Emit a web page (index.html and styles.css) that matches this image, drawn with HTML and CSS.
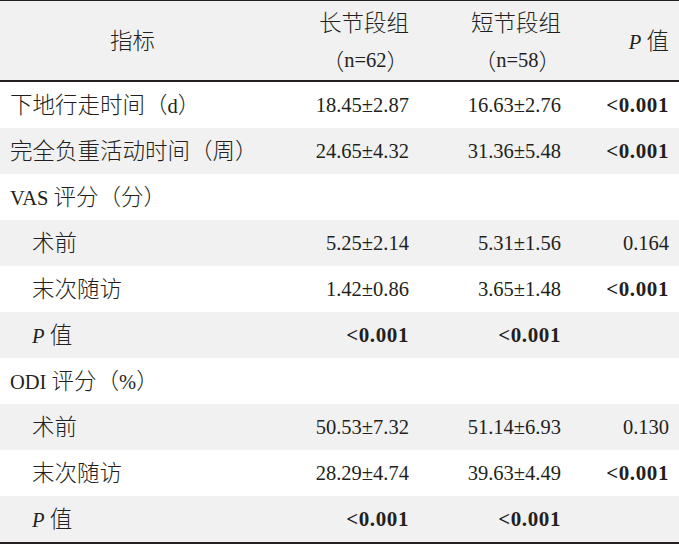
FILE: index.html
```html
<!DOCTYPE html>
<html lang="zh">
<head>
<meta charset="utf-8">
<link rel="stylesheet" href="styles.css">
</head>
<body>
<table class="tbl">
  <colgroup>
    <col class="c1"><col class="c2"><col class="c3"><col class="c4">
  </colgroup>
  <thead>
    <tr>
      <th class="name"><span class="zh">指标</span></th>
      <th class="num"><div class="l"><span class="zh">长节段组</span></div><div class="l"><span class="zh">（</span>n=62<span class="zh">）</span></div></th>
      <th class="num"><div class="l"><span class="zh">短节段组</span></div><div class="l"><span class="zh">（</span>n=58<span class="zh">）</span></div></th>
      <th class="num"><i>P</i> <span class="zh">值</span></th>
    </tr>
  </thead>
  <tbody>
    <tr><td><span class="zh">下地行走时间（</span>d<span class="zh">）</span></td><td class="num">18.45±2.87</td><td class="num">16.63±2.76</td><td class="num"><b>&lt;0.001</b></td></tr>
    <tr class="g"><td><span class="zh">完全负重活动时间（周）</span></td><td class="num">24.65±4.32</td><td class="num">31.36±5.48</td><td class="num"><b>&lt;0.001</b></td></tr>
    <tr><td>VAS <span class="zh">评分（分）</span></td><td></td><td></td><td></td></tr>
    <tr class="g"><td class="ind"><span class="zh">术前</span></td><td class="num">5.25±2.14</td><td class="num">5.31±1.56</td><td class="num">0.164</td></tr>
    <tr><td class="ind"><span class="zh">末次随访</span></td><td class="num">1.42±0.86</td><td class="num">3.65±1.48</td><td class="num"><b>&lt;0.001</b></td></tr>
    <tr class="g"><td class="ind"><i>P</i> <span class="zh">值</span></td><td class="num"><b>&lt;0.001</b></td><td class="num"><b>&lt;0.001</b></td><td></td></tr>
    <tr><td>ODI <span class="zh">评分（</span>%<span class="zh">）</span></td><td></td><td></td><td></td></tr>
    <tr class="g"><td class="ind"><span class="zh">术前</span></td><td class="num">50.53±7.32</td><td class="num">51.14±6.93</td><td class="num">0.130</td></tr>
    <tr><td class="ind"><span class="zh">末次随访</span></td><td class="num">28.29±4.74</td><td class="num">39.63±4.49</td><td class="num"><b>&lt;0.001</b></td></tr>
    <tr class="g last"><td class="ind"><i>P</i> <span class="zh">值</span></td><td class="num"><b>&lt;0.001</b></td><td class="num"><b>&lt;0.001</b></td><td></td></tr>
  </tbody>
</table>
</body>
</html>
```

FILE: styles.css
```css
html, body {
  margin: 0;
  padding: 0;
  background: #ffffff;
}
.tbl {
  width: 679px;
  table-layout: fixed;
  border-collapse: collapse;
  font-family: "Liberation Serif", "Noto Sans CJK SC", serif;
  font-size: 20.5px;
  color: #231f20;
}
.c1 { width: 265px; }
.c2 { width: 154px; }
.c3 { width: 152px; }
.c4 { width: 108px; }
.tbl .zh {
  font-family: "Noto Sans CJK SC", sans-serif;
  font-size: 22.5px;
  font-weight: 300;
  line-height: 1;
}
.tbl thead tr {
  background: #f1f1f1;
  border-top: 1px solid #231f20;
  border-bottom: 2px solid #231f20;
}
.tbl th {
  font-weight: normal;
  height: 79px;
  padding: 0 10px;
  line-height: 24px;
  vertical-align: middle;
}
.tbl th.name { text-align: center; }
.tbl .l {
  height: 39.5px;
  display: flex;
  align-items: center;
  justify-content: flex-end;
}
.tbl td {
  height: 46px;
  padding: 0 10px;
  line-height: 24px;
  white-space: nowrap;
  vertical-align: middle;
}
.tbl .num { text-align: right; }
.tbl .ind { padding-left: 32px; }
.tbl tr.g { background: #f1f1f1; }
.tbl tr.last { border-bottom: 2px solid #231f20; }
.tbl b { font-weight: bold; font-size: 21px; letter-spacing: 0.6px; }
.tbl i { font-style: italic; }
```
